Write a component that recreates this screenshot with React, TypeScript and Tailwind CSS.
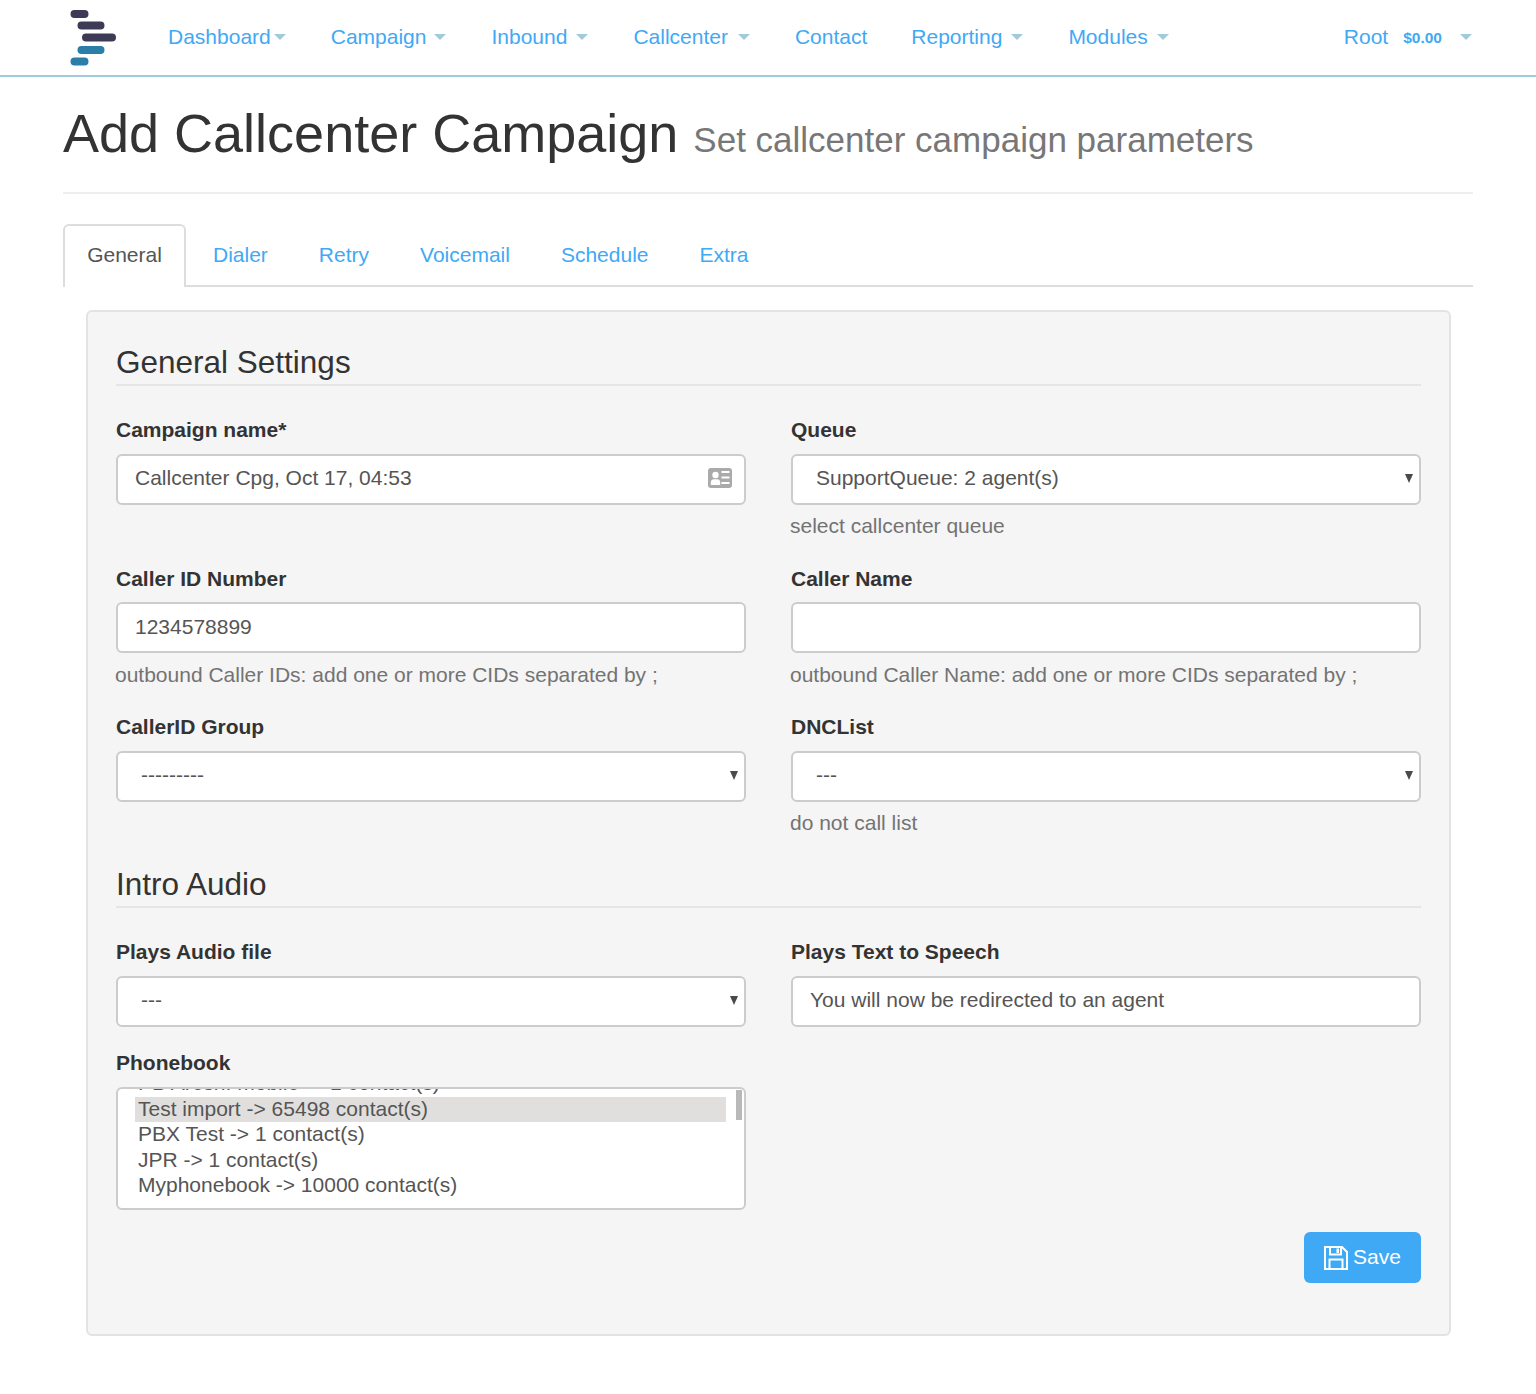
const Caret = ({ ml }: { ml: string }) => (
  <span className={`inline-block w-0 h-0 border-x-[6px] border-x-transparent border-t-[6px] border-t-[#9fcbdc] ${ml}`} />
);

const NavItem = ({ label, ml, cls = "" }: { label: string; ml?: string; cls?: string }) => (
  <a className={`flex items-center text-[#3fa9f5] ${cls}`}>
    {label}
    {ml && <Caret ml={ml} />}
  </a>
);

const Label = ({ children }: { children: string }) => (
  <label className="block font-bold text-[#333] text-[21px] leading-[30px] mb-[9px]">{children}</label>
);

const Help = ({ children, mt = "mt-[6px]" }: { children: string; mt?: string }) => (
  <p className={`text-[#737373] text-[21px] leading-[30px] -ml-px ${mt}`}>{children}</p>
);

const Control = ({ children, pad = "pl-[17px]", up = "" }: { children?: React.ReactNode; pad?: string; up?: string }) => (
  <div className={`relative h-[51px] bg-white border-2 border-[#ccc] rounded-[6px] flex items-center text-[#555] text-[21px] ${pad} ${up}`}>
    {children}
  </div>
);

const Select = ({ value, pad = "pl-[23px]" }: { value: string; pad?: string }) => (
  <Control pad={pad}>
    <span className="-mt-[4px]">{value}</span>
    <span className="absolute right-[6px] top-[18px] w-0 h-0 border-x-[4.5px] border-x-transparent border-t-[9px] border-t-[#4a4a4a]" />
  </Control>
);

const Legend = ({ children }: { children: string }) => (
  <div className="text-[31.5px] leading-[36px] text-[#333] pb-[4px] border-b-2 border-[#e5e5e5]">{children}</div>
);

const CardIcon = () => (
  <svg width="24" height="20" viewBox="0 0 24 20" className="absolute right-[12px] top-[12px]">
    <rect width="24" height="20" rx="3" fill="#aaa" />
    <circle cx="7.5" cy="7" r="3.2" fill="#fff" />
    <path d="M2.8 17v-2.5c0-2 1.5-3.2 3-3.2h3.4c1.500 0 3 1.200 3 3.200V17z" fill="#fff" />
    <path d="M13.500 4h8M13.500 9.500h8M13.500 15h8" stroke="#fff" strokeWidth="2" />
  </svg>
);

const SaveIcon = () => (
  <svg width="24" height="24" viewBox="0 0 24 24" fill="none" stroke="#fff" strokeWidth="2" className="shrink-0">
    <path d="M1 1h17l5 5v17H1z" />
    <path d="M6 1v7.500h11V1" />
    <path d="M5.500 23V13.500h13V23" />
    <rect x="12.500" y="2.500" width="2.500" height="4.500" fill="#fff" stroke="none" />
  </svg>
);

const tabs = ["Dialer", "Retry", "Voicemail", "Schedule", "Extra"];
const books = ["Test import -> 65498 contact(s)", "PBX Test -> 1 contact(s)", "JPR -> 1 contact(s)", "Myphonebook -> 10000 contact(s)"];

export default function App() {
  return (
    <div className="h-[1394px] bg-white font-['Liberation_Sans',Arial,sans-serif] text-[21px]">
      <nav className="h-[77px] border-b-2 border-[#9fcbdc] flex items-center pl-[70px] pr-[64px]">
        <svg width="47" height="56" viewBox="0 0 47 56" className="shrink-0">
          <g strokeLinecap="round" strokeWidth="8">
            <path d="M4.500 4h10M11.500 15.500h19M16 27.500h26" stroke="#3d3a55" />
            <path d="M11.500 40h19M4.500 51.500h10" stroke="#2b7ea8" />
          </g>
        </svg>
        <div className="flex items-center gap-[45px] ml-[51px] -mt-[1px]">
          <NavItem label="Dashboard" ml="ml-[3px]" />
          <NavItem label="Campaign" ml="ml-[8px]" />
          <NavItem label="Inbound" ml="ml-[9px]" />
          <NavItem label="Callcenter" ml="ml-[10px]" />
          <NavItem label="Contact" cls="-mr-px" />
          <NavItem label="Reporting" ml="ml-[9px]" />
          <NavItem label="Modules" ml="ml-[9px]" />
        </div>
        <div className="ml-auto flex items-center text-[#3fa9f5] -mt-[1px]">
          Root
          <b className="text-[15.5px] ml-[15px] mt-[2px]">$0.00</b>
          <Caret ml="ml-[18px]" />
        </div>
      </nav>

      <main className="px-[63px]">
        <header className="h-[117px] border-b-2 border-[#eee] flex items-baseline pt-[20px]">
          <h1 className="text-[54px] leading-[72px] text-[#333]">Add Callcenter Campaign</h1>
          <small className="text-[35px] text-[#777] ml-[15px]">Set callcenter campaign parameters</small>
        </header>

        <div className="mt-[30px] h-[63px] border-b-2 border-[#ddd] flex items-stretch">
          <div className="h-[63px] w-[123px] bg-white border-2 border-b-0 border-[#ddd] rounded-t-[6px] text-[#555] flex items-center justify-center pb-[3px]">
            General
          </div>
          <div className="flex items-center gap-[51px] ml-[27px] text-[#3fa9f5]">
            {tabs.map((t) => (
              <a key={t}>{t}</a>
            ))}
          </div>
        </div>

        <section className="mt-[23px] ml-[23px] mr-[22px] h-[1026px] bg-[#f5f5f5] border-2 border-[#e3e3e3] rounded-[6px] px-[28px] pt-[32px]">
          <Legend>General Settings</Legend>
          <div className="grid grid-cols-2 gap-x-[45px] mt-[29px]">
            <div className="h-[149px]">
              <Label>Campaign name*</Label>
              <Control>
                <span className="-mt-[4px]">Callcenter Cpg, Oct 17, 04:53</span>
                <CardIcon />
              </Control>
            </div>
            <div className="h-[149px]">
              <Label>Queue</Label>
              <Select value="SupportQueue: 2 agent(s)" />
              <Help>select callcenter queue</Help>
            </div>
            <div className="h-[148px]">
              <Label>Caller ID Number</Label>
              <Control up="-mt-px">
                <span className="-mt-[2px]">1234578899</span>
              </Control>
              <Help mt="mt-[7px]">outbound Caller IDs: add one or more CIDs separated by ;</Help>
            </div>
            <div className="h-[148px]">
              <Label>Caller Name</Label>
              <Control up="-mt-px" />
              <Help mt="mt-[7px]">outbound Caller Name: add one or more CIDs separated by ;</Help>
            </div>
            <div className="h-[132px]">
              <Label>CallerID Group</Label>
              <Select value="---------" />
            </div>
            <div className="h-[132px]">
              <Label>DNCList</Label>
              <Select value="---" />
              <Help>do not call list</Help>
            </div>
          </div>

          <div className="mt-[22px]">
            <Legend>Intro Audio</Legend>
          </div>
          <div className="grid grid-cols-2 gap-x-[45px] mt-[29px]">
            <div className="h-[111px]">
              <Label>Plays Audio file</Label>
              <Select value="---" />
            </div>
            <div className="h-[111px]">
              <Label>Plays Text to Speech</Label>
              <Control>
                <span className="-mt-[4px]">You will now be redirected to an agent</span>
              </Control>
            </div>
            <div>
              <Label>Phonebook</Label>
              <div className="relative h-[123px] bg-white border-2 border-[#ccc] rounded-[6px] overflow-hidden text-[#555] text-[21px] pl-[17px] pr-[18px]">
                <div className="-mt-[18px] h-[25.6px] leading-[24px] pl-[3px] whitespace-nowrap">PB Aresh. mobile -&gt; 1 contact(s)</div>
                {books.map((b, i) => (
                  <div key={b} className={`h-[25.6px] leading-[24px] pl-[3px] ${i === 0 ? "bg-[#e0dfdd]" : ""}`}>
                    {b}
                  </div>
                ))}
                <span className="absolute right-[2px] top-[1px] w-[6px] h-[30px] bg-[#b9b9b9]" />
              </div>
            </div>
          </div>

          <div className="flex justify-end mt-[22px]">
            <button className="h-[51px] w-[117px] bg-[#3fa9f5] text-white rounded-[6px] flex items-center justify-center gap-[5px] text-[21px]">
              <SaveIcon />
              <span className="-mt-[2px]">Save</span>
            </button>
          </div>
        </section>
      </main>
    </div>
  );
}
